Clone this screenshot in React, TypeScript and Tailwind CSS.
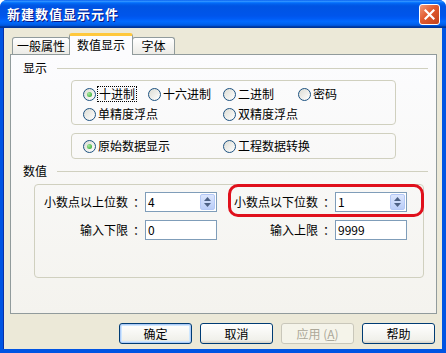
import React from "react";

const FONT = { fontFamily: '"Noto Sans CJK SC", "Noto Sans", sans-serif' };

function Radio({ checked, label, focus }: { checked?: boolean; label: string; focus?: boolean }) {
  return (
    <div className="flex items-center h-[18px]">
      <span className="w-[13px] h-[13px] rounded-full border border-[#1C5180] bg-[linear-gradient(135deg,#DCDCD4,#FFFFFF)] flex items-center justify-center shrink-0">
        {checked && <span className="w-[5px] h-[5px] rounded-full bg-[radial-gradient(circle_at_35%_35%,#A7E8A0,#21A121)]" />}
      </span>
      <span
        className={
          "ml-[2px] text-[12px] leading-[14px] text-black whitespace-nowrap " +
          (focus ? "outline outline-1 outline-dotted outline-black px-[1px]" : "")
        }
      >
        {label}
      </span>
    </div>
  );
}

function Spin() {
  return (
    <div className="w-[15px] h-[16px] rounded-[2px] border border-[#B4C8F6] bg-[linear-gradient(to_bottom,#DCE6FD,#BACDF8)] flex flex-col items-center justify-center gap-[2px]">
      <svg width="7" height="4" viewBox="0 0 7 4">
        <path d="M0 4 L3.5 0 L7 4 Z" fill="#4D6185" />
      </svg>
      <svg width="7" height="4" viewBox="0 0 7 4">
        <path d="M0 0 L3.5 4 L7 0 Z" fill="#4D6185" />
      </svg>
    </div>
  );
}

function Field({ label, value, spin }: { label: string; value: string; spin?: boolean }) {
  return (
    <div className="flex items-center">
      <div className="w-[110px] flex justify-end items-center text-[12px] leading-[14px] text-black whitespace-nowrap">
        <span>{label}</span>
        <span className="w-[5px]" />
        <span className="w-[12px] text-center">：</span>
      </div>
      <div className="w-[72px] h-[20px] border border-[#7F9DB9] bg-white flex items-center justify-between pl-[2px] pr-[1px]">
        <span className="text-[12px] leading-[14px] text-black">{value}</span>
        {spin && <Spin />}
      </div>
    </div>
  );
}

function Btn({ label, def, disabled }: { label: React.ReactNode; def?: boolean; disabled?: boolean }) {
  return (
    <div
      className={
        "w-[73px] h-[21px] rounded-[3px] border flex items-center justify-center text-[12px] leading-[14px] " +
        (disabled
          ? "border-[#C9C7BA] bg-[#F5F4EA] text-[#ACA899]"
          : def
          ? "border-[#003C74] bg-[linear-gradient(to_bottom,#FFFFFF,#F0F0EA_85%,#D6D0C5)] text-black shadow-[inset_0_0_0_1px_#AECBF7,inset_0_0_0_2px_#CEE7FF]"
          : "border-[#003C74] bg-[linear-gradient(to_bottom,#FFFFFF,#F0F0EA_85%,#D6D0C5)] text-black")
      }
    >
      {label}
    </div>
  );
}

export default function App() {
  return (
    <div style={FONT} className="w-[446px] h-[353px] rounded-t-[7px] bg-[#0054E3] flex flex-col overflow-hidden">
      {/* Title bar */}
      <div className="h-[28px] shrink-0 flex items-center justify-between pl-[7px] pr-[6px] bg-[linear-gradient(to_bottom,#0058ee_0%,#3593ff_4%,#288eff_6%,#127dff_8%,#036ffc_10%,#0262ee_14%,#0057e5_20%,#0054e3_24%,#0055eb_56%,#005bf5_66%,#026afe_76%,#0062ef_86%,#0052d6_92%,#0040ab_94%,#003092_100%)]">
        <span className="text-white font-bold text-[13px] leading-[16px] tracking-[1px] [text-shadow:1px_1px_0_#0A1883]">
          新建数值显示元件
        </span>
        <div className="w-[21px] h-[21px] rounded-[3px] border border-white bg-[linear-gradient(135deg,#F29A7A,#E15A2E_45%,#C2421B)] flex items-center justify-center">
          <svg width="11" height="11" viewBox="0 0 11 11">
            <path d="M1.5 1.5 L9.5 9.5 M9.5 1.5 L1.5 9.5" stroke="white" strokeWidth="2.2" strokeLinecap="square" />
          </svg>
        </div>
      </div>

      {/* Body */}
      <div className="flex-1 ml-[3px] mr-[4px] mb-[4px] bg-[#ECE9D8] flex flex-col pt-[5px] pl-[6px] pr-[6px] border-l border-[#0830A8]">
        {/* Tabs */}
        <div className="h-[21px] flex items-end pl-[2px] text-[12px] leading-[14px] text-black">
          <div className="w-[58px] h-[17px] border border-b-0 border-[#919B9C] rounded-t-[3px] bg-[linear-gradient(to_bottom,#FFFFFF,#ECEBE6)] flex items-center justify-center">
            一般属性
          </div>
          <div className="relative z-10 w-[64px] h-[22px] -mb-[1px] -mx-[1px] border border-b-0 border-[#919B9C] border-t-[3px] border-t-[#FFC83C] rounded-t-[3px] bg-[#FCFCFE] flex items-start justify-center pt-[2px]">
            数值显示
          </div>
          <div className="w-[43px] h-[17px] border border-b-0 border-[#919B9C] rounded-t-[3px] bg-[linear-gradient(to_bottom,#FFFFFF,#ECEBE6)] flex items-center justify-center">
            字体
          </div>
        </div>

        {/* Panel */}
        <div className="w-[427px] h-[260px] border border-[#919B9C] bg-[linear-gradient(to_bottom,#FCFCFE,#F4F3EE)] flex flex-col text-[12px] leading-[14px] text-black">
          {/* 显示 header */}
          <div className="mt-[6px] h-[14px] flex items-center pl-[12px] pr-[8px]">
            <span>显示</span>
            <div className="ml-[10px] flex-1 h-px bg-[#D0D0BF]" />
          </div>

          {/* group 1 */}
          <div className="mt-[5px] ml-[60px] w-[325px] h-[45px] border border-[#D0D0BF] rounded-[4px] pl-[11px] pt-[4px] flex flex-col gap-[2px]">
            <div className="flex">
              <div className="w-[65px]"><Radio checked label="十进制" focus /></div>
              <div className="w-[75px]"><Radio label="十六进制" /></div>
              <div className="w-[75px]"><Radio label="二进制" /></div>
              <div><Radio label="密码" /></div>
            </div>
            <div className="flex">
              <div className="w-[140px]"><Radio label="单精度浮点" /></div>
              <div><Radio label="双精度浮点" /></div>
            </div>
          </div>

          {/* group 2 */}
          <div className="mt-[8px] ml-[60px] w-[325px] h-[26px] border border-[#D0D0BF] rounded-[4px] pl-[11px] flex items-center">
            <div className="w-[140px]"><Radio checked label="原始数据显示" /></div>
            <div><Radio label="工程数据转换" /></div>
          </div>

          {/* 数值 header */}
          <div className="mt-[5px] h-[14px] flex items-center pl-[12px] pr-[8px]">
            <span>数值</span>
            <div className="ml-[10px] flex-1 h-px bg-[#D0D0BF]" />
          </div>

          {/* group 3 */}
          <div className="relative mt-[6px] ml-[23px] w-[390px] h-[94px] border border-[#D0D0BF] rounded-[4px] pt-[7px] flex flex-col gap-[8px]">
            <div className="flex gap-[8px]">
              <Field label="小数点以上位数" value="4" spin />
              <Field label="小数点以下位数" value="1" spin />
            </div>
            <div className="flex gap-[8px]">
              <Field label="输入下限" value="0" />
              <Field label="输入上限" value="9999" />
            </div>
            <div className="absolute left-[193px] top-[-1px] w-[196px] h-[33px] border-[3px] border-[#E0101C] rounded-[10px] pointer-events-none" />
          </div>
        </div>

        {/* Buttons */}
        <div className="mt-[9px] flex justify-end gap-[8px] pr-[1px]">
          <Btn label="确定" def />
          <Btn label="取消" />
          <Btn disabled label={<span>应用 (<span className="underline">A</span>)</span>} />
          <Btn label="帮助" />
        </div>
      </div>
    </div>
  );
}
